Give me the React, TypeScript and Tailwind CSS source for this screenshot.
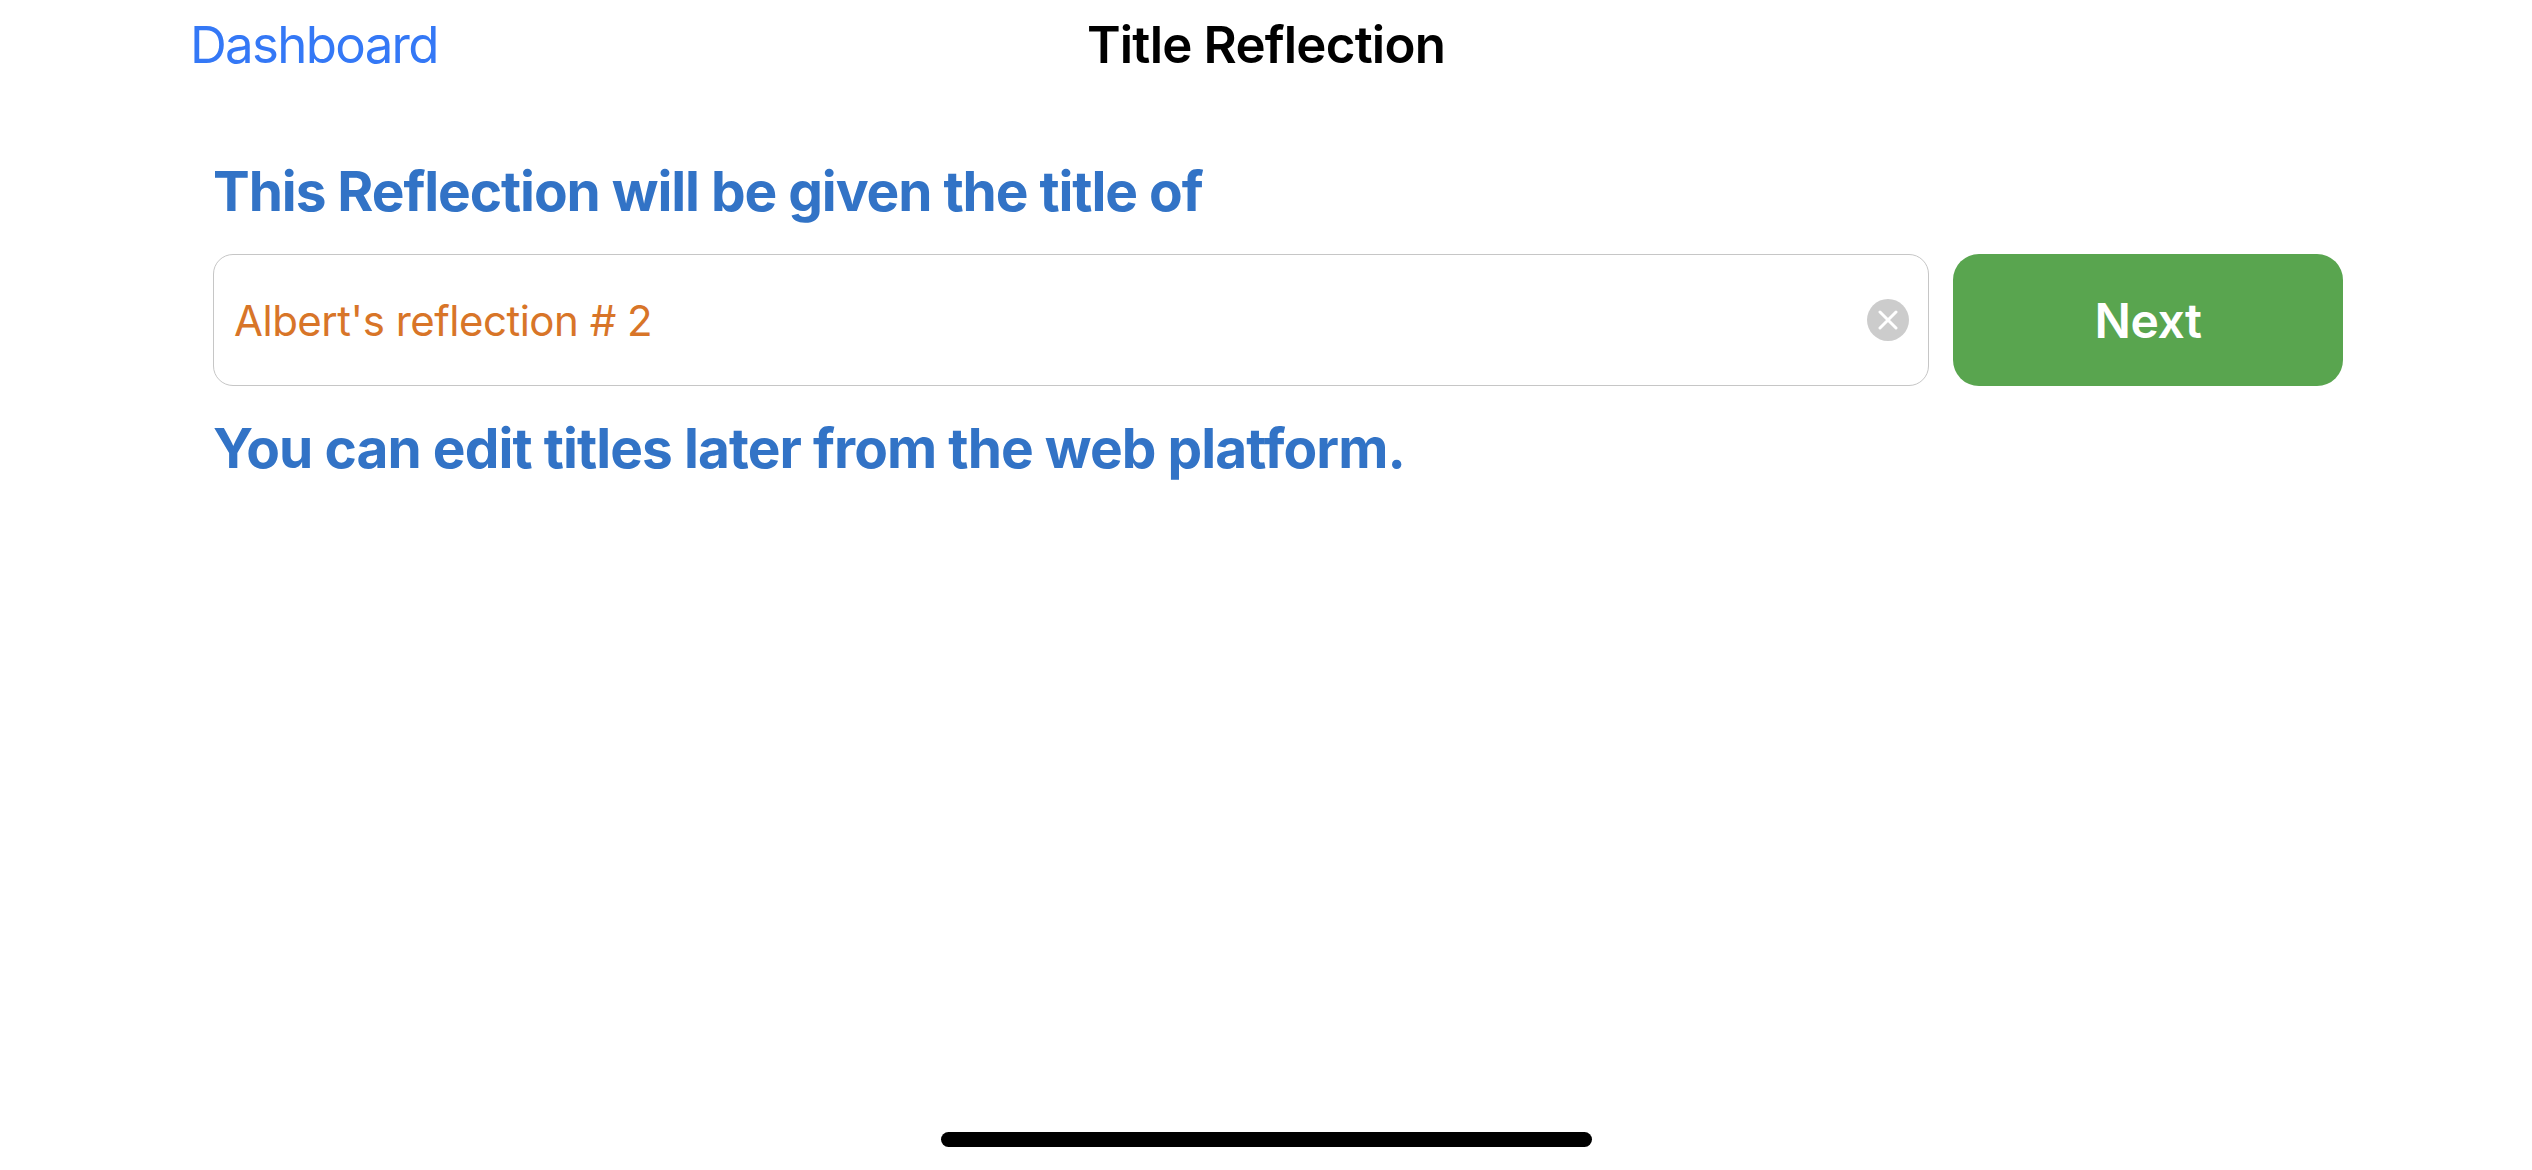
const App = () => {
  return (
    <div className="flex h-screen w-full flex-col bg-white font-['Inter',sans-serif]">
      <header className="grid h-[88px] shrink-0 grid-cols-[1fr_auto_1fr] items-center px-[190px]">
        <a className="text-[51px] leading-none tracking-[-1.7px] text-[#3478f6]">Dashboard</a>
        <h1 className="text-[51px] leading-none font-semibold tracking-[-0.8px] text-black">Title Reflection</h1>
        <div />
      </header>

      <main className="flex flex-col pt-[70px] pr-[189px] pl-[213px]">
        <h2 className="text-[55px] leading-[66px] font-bold tracking-[-1.07px] text-[#3273c6]">
          This Reflection will be given the title of
        </h2>

        <div className="mt-[30px] flex gap-6">
          <div className="flex h-[132px] flex-1 items-center rounded-[20px] border border-[#c6c6c6] pr-[19px] pl-[20px]">
            <span className="flex-1 text-[42px] tracking-[-0.5px] text-[#d87528]">Albert's reflection # 2</span>
            <button className="flex h-[42px] w-[42px] items-center justify-center rounded-full bg-[#cccccc]">
              <svg width="20" height="20" viewBox="0 0 20 20" fill="none" stroke="white" strokeWidth="3" strokeLinecap="round">
                <path d="M2 2L18 18M18 2L2 18" />
              </svg>
            </button>
          </div>
          <button className="h-[132px] w-[390px] rounded-[26px] bg-[#59a54f] pt-[2px] text-[48px] font-semibold tracking-[-0.5px] text-white">
            Next
          </button>
        </div>

        <p className="mt-[29px] text-[55px] leading-[66px] font-bold tracking-[-0.93px] text-[#3273c6]">
          You can edit titles later from the web platform.
        </p>
      </main>

      <div className="mt-auto mb-[23px] flex justify-center">
        <div className="h-[15px] w-[651px] rounded-[8px] bg-black" />
      </div>
    </div>
  );
};

export default App;
